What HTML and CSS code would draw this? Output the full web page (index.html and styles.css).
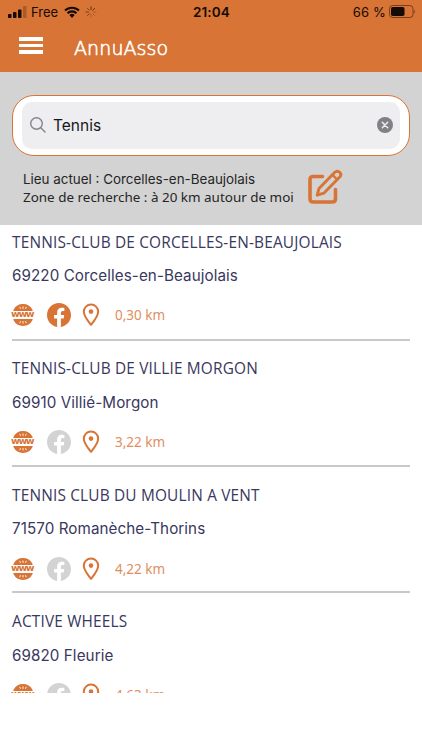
FILE: index.html
```html
<!DOCTYPE html>
<html lang="fr">
<head>
<meta charset="utf-8">
<title>AnnuAsso</title>
<link rel="stylesheet" href="styles.css">
</head>
<body>
<svg width="0" height="0" class="defs">
  <symbol id="globe" viewBox="0 0 22 24">
    <path d="M1.400 7A11 11.500 0 0 1 20.600 7V8H1.400ZM1.400 17A11 11.500 0 0 0 20.600 17V16H1.400Z" fill="currentColor"/>
    <path d="M7.700 3.800l.8 2M11 3.500v2.400M14.300 3.800l-.8 2M7.700 20.200l.8-2M11 20.500v-2.400M14.300 20.200l-.8-2" stroke="#fff" stroke-width=".9"/>
  </symbol>
  <symbol id="fb" viewBox="0 0 24 24">
    <path fill="currentColor" d="M24 12.070C24 5.410 18.630 0 12 0S0 5.410 0 12.070C0 18.100 4.390 23.100 10.130 24v-8.440H7.080v-3.490h3.050V9.410c0-3.020 1.790-4.690 4.530-4.690 1.310 0 2.690.24 2.690.24v2.970h-1.520c-1.490 0-1.950.93-1.950 1.890v2.250h3.320l-.53 3.490h-2.790V24C19.610 23.100 24 18.100 24 12.070Z"/>
  </symbol>
  <symbol id="pin" viewBox="0 0 18 24">
    <path d="M9 21.800C6 18 1.800 13 1.800 8.700a7.200 7.200 0 0 1 14.400 0c0 4.300-4.200 9.300-7.200 13.100Z" fill="none" stroke="currentColor" stroke-width="2" stroke-linejoin="round"/>
    <circle cx="9" cy="8.600" r="2.300" fill="currentColor"/>
  </symbol>
</svg>
<header class="header">
  <div class="status">
    <svg class="signal" width="19" height="12" viewBox="0 0 19 12"><rect y="8" width="3.500" height="4" rx=".8"/><rect x="5" y="6" width="3.500" height="6" rx=".8"/><rect x="10" y="3.500" width="3.500" height="8.500" rx=".8"/><rect x="15" y="0" width="3.500" height="12" rx=".8" opacity=".25"/></svg>
    <span class="carrier">Free</span>
    <svg class="wifi" width="16" height="12" viewBox="0 0 16 12"><path d="M1 4.600a10 10 0 0 1 14 0M3.500 7.200a6.400 6.400 0 0 1 9 0" fill="none" stroke="#160a04" stroke-width="2.100"/><path d="M5.400 9.100a3.700 3.700 0 0 1 5.200 0L8 11.900Z"/></svg>
    <svg class="spinner" width="12" height="12" viewBox="0 0 12 12"><g fill="none" stroke="#3c1d0b" stroke-width="1" stroke-linecap="round"><path d="M6 1v2.500M9.500 2.500L7.800 4.200" opacity=".8"/><path d="M11 6H8.500M9.500 9.500L7.800 7.800M6 11V8.500" opacity=".25"/><path d="M2.500 9.500l1.700-1.700M1 6h2.500M2.500 2.500l1.700 1.700" opacity=".6"/></g></svg>
    <span class="time">21:04</span>
    <span class="percent">66 %</span>
    <svg class="battery" width="27" height="13" viewBox="0 0 27 13"><rect x=".5" y=".5" width="23.500" height="12" rx="3.200" fill="none" stroke="#160a04" opacity=".5"/><rect x="2" y="2" width="13.500" height="9" rx="1.800"/><path d="M25.200 4.500q1.600 2 0 4Z" opacity=".5"/></svg>
  </div>
  <div class="nav">
    <div class="menu"><i></i><i></i><i></i></div>
    <span class="brand">AnnuAsso</span>
  </div>
</header>
<section class="search-panel">
  <div class="search-frame">
    <div class="search">
      <svg width="16" height="16" viewBox="0 0 16 16" fill="none" stroke="#85858a" stroke-width="1.400" stroke-linecap="round"><circle cx="6.500" cy="6.500" r="5.800"/><path d="M10.800 10.800L15 15"/></svg>
      <span class="query">Tennis</span>
      <svg class="clear" width="16" height="16" viewBox="0 0 16 16"><circle cx="8" cy="8" r="8" fill="#808085"/><path d="M5.300 5.300l5.400 5.400M10.700 5.300l-5.400 5.400" stroke="#eee" stroke-width="1.500" stroke-linecap="round"/></svg>
    </div>
  </div>
  <div class="place">
    <div class="place-text">
      <div class="current">Lieu actuel : Corcelles-en-Beaujolais</div>
      <div class="zone">Zone de recherche : à 20 km autour de moi</div>
    </div>
    <svg class="edit" width="35" height="36" viewBox="0 0 35 36" fill="none" stroke="#d87435" stroke-linecap="round" stroke-linejoin="round"><path d="M14.500 7.500H5.200Q2 7.500 2 10.700V29.800Q2 33 5.200 33H24.300Q27.500 33 27.500 29.800V20.500" stroke-width="3.600"/><path d="M9.200 26.200L11 19.500 26.800 3.300Q29.200 1 31.700 3.300 34 5.700 31.700 8.100L15.800 24.200Z" stroke-width="2.900"/><path d="M24.500 5.800L29.200 10.500" stroke-width="2.400"/></svg>
  </div>
</section>
<main class="list">
  <article class="club">
    <h2>TENNIS-CLUB DE CORCELLES-EN-BEAUJOLAIS</h2>
    <p>69220 Corcelles-en-Beaujolais</p>
    <div class="links"><span class="web"><svg><use href="#globe"/></svg><b>www</b></span><svg class="fb"><use href="#fb"/></svg><svg class="pin"><use href="#pin"/></svg><span class="km">0,30 km</span></div>
  </article>
  <article class="club">
    <h2>TENNIS-CLUB DE VILLIE MORGON</h2>
    <p>69910 Villié-Morgon</p>
    <div class="links"><span class="web"><svg><use href="#globe"/></svg><b>www</b></span><svg class="fb off"><use href="#fb"/></svg><svg class="pin"><use href="#pin"/></svg><span class="km">3,22 km</span></div>
  </article>
  <article class="club">
    <h2>TENNIS CLUB DU MOULIN A VENT</h2>
    <p>71570 Romanèche-Thorins</p>
    <div class="links"><span class="web"><svg><use href="#globe"/></svg><b>www</b></span><svg class="fb off"><use href="#fb"/></svg><svg class="pin"><use href="#pin"/></svg><span class="km">4,22 km</span></div>
  </article>
  <article class="club">
    <h2>ACTIVE WHEELS</h2>
    <p>69820 Fleurie</p>
    <div class="links"><span class="web"><svg><use href="#globe"/></svg><b>www</b></span><svg class="fb off"><use href="#fb"/></svg><svg class="pin"><use href="#pin"/></svg><span class="km">4,63 km</span></div>
  </article>
</main>
</body>
</html>
```
FILE: styles.css
```css
* { box-sizing: border-box; }
body { margin: 0; width: 422px; height: 750px; overflow: hidden; background: #fff; font-family: Inter, "Liberation Sans", sans-serif; }
svg { display: block; flex: none; }
.defs { position: absolute; }
.header { height: 72px; background: #d87435; }
.status { height: 24px; display: grid; grid-template-columns: 23px 33px 21px 108px 1fr auto 27px; align-items: center; padding: 0 6px 0 8px; color: #160a04; font-size: 13px; line-height: 24px; white-space: nowrap; fill: #160a04; }
.signal { margin-top: -1px; }
.battery { margin-top: -1px; }
.time { font-weight: 600; font-size: 13.5px; letter-spacing: .1px; }
.percent { margin-right: 3px; letter-spacing: .2px; }
.nav { display: flex; height: 48px; padding: 12px 0 0 19px; }
.menu { width: 24px; display: flex; flex-direction: column; gap: 3px; padding-top: 1px; margin-right: 31px; }
.menu i { height: 3.700px; background: #fff; }
.brand { color: #fff; font: 200 19px/25px "DejaVu Sans", sans-serif; letter-spacing: .1px; -webkit-text-stroke: .6px #fff; }
.search-panel { height: 153px; padding: 23px 12px 0; background: #d3d3d3; }
.search-frame { height: 61px; padding: 6px 9px; border: 1px solid #d87435; border-radius: 22px; background: #fff; }
.search { height: 47px; border-radius: 10px; background: #eeeef0; display: flex; align-items: center; padding: 0 7px 0 8px; }
.query { margin-left: 7px; color: #17171b; font-size: 15.500px; line-height: 20px; margin-top: 1px; }
.search svg { margin-top: -1px; }
.search .clear { margin-left: auto; }
.place { display: flex; padding: 2px 0 0 11px; height: 52px; margin-top: 8px; }
.place-text { width: 285px; padding-top: 4px; font-size: 13.400px; line-height: 18px; color: #252525; white-space: nowrap; }
.zone { font-family: "Noto Sans", sans-serif; font-size: 13.450px; }
.edit { margin-top: 3px; }
.list { height: 468px; padding: 0 12px; overflow: hidden; }
.club { height: 126.400px; border-bottom: 2px solid #c9c9c9; padding-top: 17.600px; color: #393860; }
.club:first-child { height: 115.700px; padding-top: 6.600px; }
h2 { margin: 0; font: 400 15.400px/22px "Open Sans", sans-serif; letter-spacing: .18px; white-space: nowrap; }
p { margin: 10.500px 0 0; font-size: 15.200px; line-height: 23px; letter-spacing: .08px; white-space: nowrap; }
.links { display: flex; align-items: center; height: 24px; margin-top: 16.400px; color: #d87435; }
.web { display: grid; width: 22px; height: 24px; margin-right: 13px; }
.web svg { grid-area: 1 / 1; width: 22px; height: 24px; }
.web b { grid-area: 1 / 1; font: 700 9.500px/22px "DejaVu Sans", sans-serif; letter-spacing: -1.400px; margin-left: -1px; white-space: nowrap; }
.fb { width: 24px; height: 24px; margin-right: 11px; }
.off { color: #d3d3d3; }
.pin { width: 18px; height: 24px; margin-right: 15px; }
.km { font: 13.500px/24px "Noto Sans", sans-serif; color: #df8e5d; }
```
